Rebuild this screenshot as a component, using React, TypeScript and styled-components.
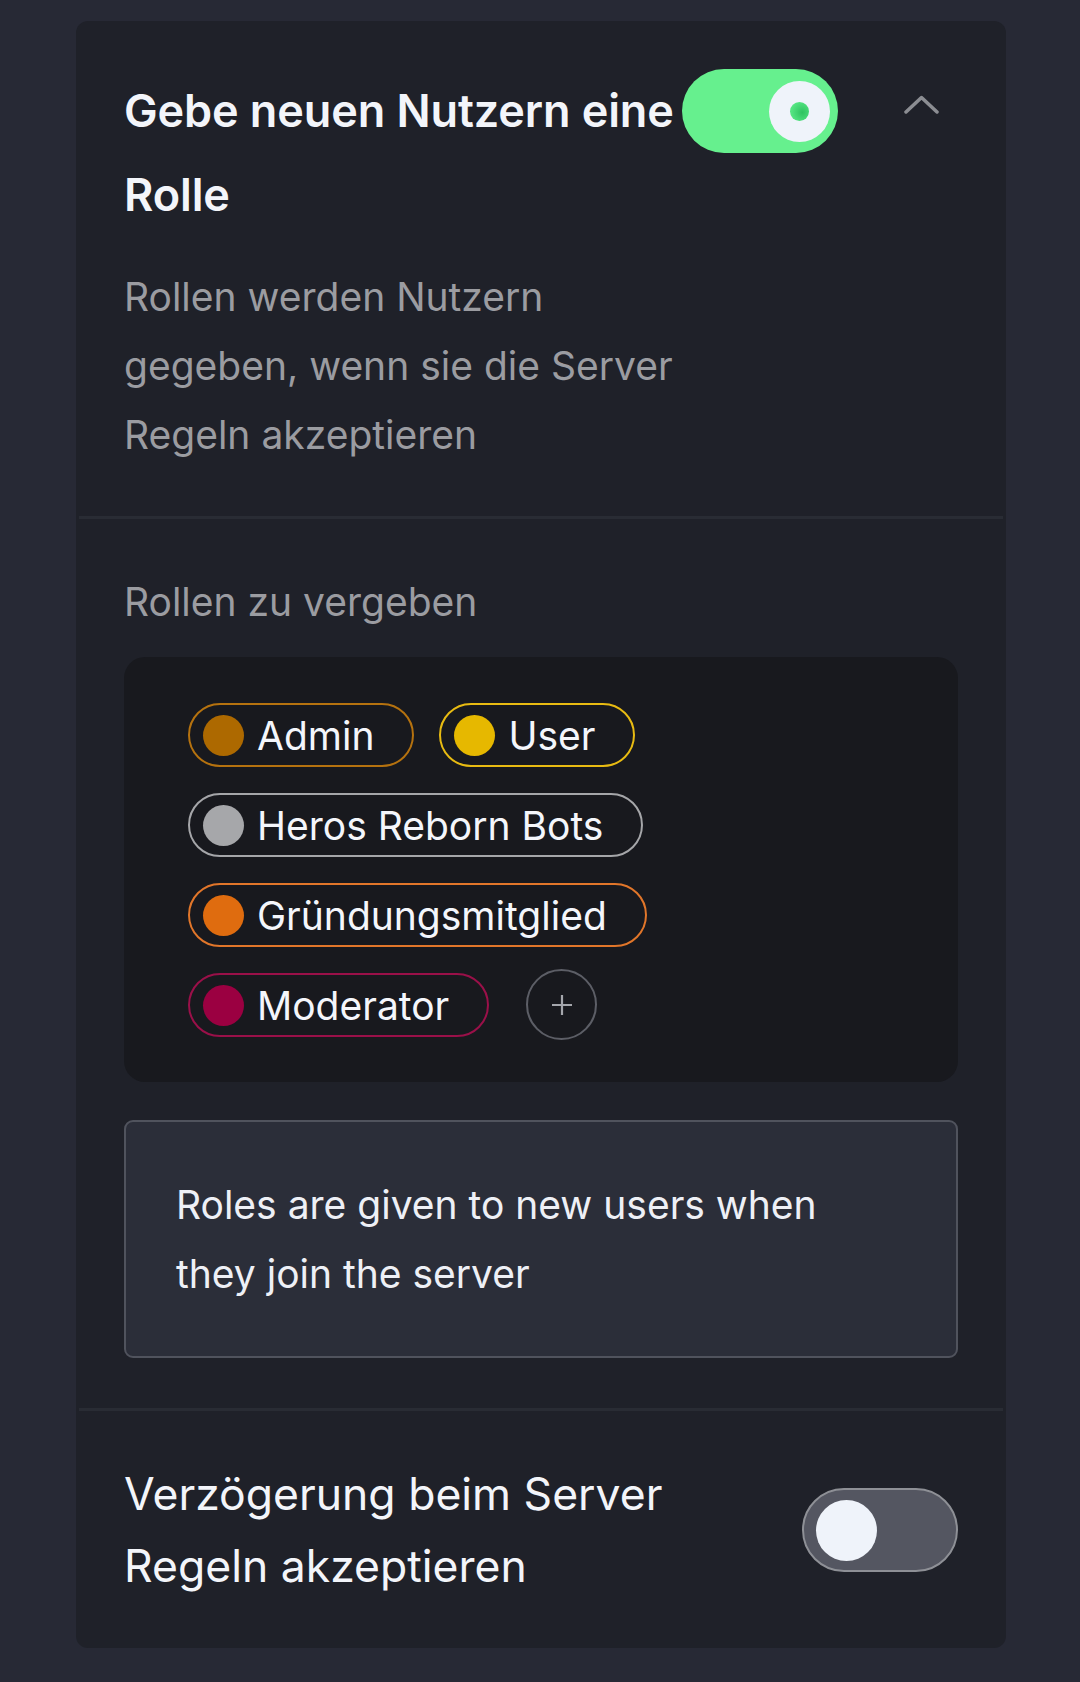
import React from "react";
import styled, { createGlobalStyle } from "styled-components";

const Global = createGlobalStyle`
  html, body { margin: 0; padding: 0; background: #272935; }
  body { font-family: Inter, "Noto Sans", sans-serif; -webkit-font-smoothing: antialiased; }
  * { box-sizing: border-box; }
`;

const Page = styled.div`
  min-height: 1682px;
  padding: 21px 74px 34px 76px;
  background: #272935;
`;

const Card = styled.section`
  background: #1f2129;
  border-radius: 12px;
  overflow: hidden;
`;

const Block = styled.div<{ $pt: number; $pb: number }>`
  padding: ${(p) => p.$pt}px 48px ${(p) => p.$pb}px 48px;
`;

const Divider = styled.div`
  height: 3px;
  margin: 0 3px;
  background: #292c34;
`;

const Header = styled.div`
  display: flex;
  align-items: flex-start;
`;

const Title = styled.h2`
  flex: 0 0 558px;
  margin: 0;
  font-size: 45px;
  line-height: 84px;
  font-weight: 600;
  color: #f3f5fa;
  letter-spacing: -0.1px;
  white-space: normal;
`;

const Toggle = styled.div<{ $on: boolean }>`
  flex: 0 0 auto;
  width: 156px;
  height: 84px;
  border-radius: 42px;
  display: flex;
  align-items: center;
  justify-content: ${(p) => (p.$on ? "flex-end" : "flex-start")};
  padding: ${(p) => (p.$on ? "0 8px" : "0 12px")};
  background: ${(p) => (p.$on ? "#66f08e" : "#545661")};
  border: ${(p) => (p.$on ? "none" : "2px solid #8e9096")};
`;

const Knob = styled.div`
  width: 61px;
  height: 61px;
  border-radius: 50%;
  background: #eff3fa;
  display: flex;
  align-items: center;
  justify-content: center;
`;

const KnobDot = styled.div`
  width: 19px;
  height: 19px;
  border-radius: 50%;
  background: radial-gradient(circle at 65% 55%, #2fc260 0%, #55e582 70%);
`;

const Chevron = styled.button`
  margin: 26px 19px 0 auto;
  padding: 0;
  border: none;
  background: none;
  width: 35px;
  height: 19px;
  display: flex;
  color: #8b8d92;
`;

const Desc = styled.p`
  margin: 25px 0 0;
  max-width: 570px;
  font-size: 39px;
  line-height: 69px;
  color: #9b9ca1;
`;

const Label = styled.div`
  font-size: 39px;
  line-height: 69px;
  color: #9b9ca1;
`;

const RolesBox = styled.div`
  margin-top: 21px;
  background: #18191e;
  border-radius: 21px;
  padding: 46px 64px 45px;
  display: flex;
  flex-wrap: wrap;
  align-items: center;
  column-gap: 25px;
  row-gap: 26px;
`;

const Chip = styled.div<{ $b: string }>`
  height: 64px;
  border-radius: 32px;
  border: 2px solid ${(p) => p.$b};
  display: flex;
  align-items: center;
  padding: 0 38px 0 13px;
  gap: 13px;
  font-size: 39px;
  color: #f4f6fb;
  white-space: nowrap;
`;

const Dot = styled.span<{ $c: string }>`
  width: 41px;
  height: 41px;
  border-radius: 50%;
  background: ${(p) => p.$c};
  flex: 0 0 auto;
`;

const AddButton = styled.button`
  width: 71px;
  height: 71px;
  margin: -4px 0 -3px 12px;
  border-radius: 50%;
  border: 2px solid #5c5e66;
  background: transparent;
  display: flex;
  align-items: center;
  justify-content: center;
  padding: 0;
  color: #a4a6ac;
`;

const InfoBox = styled.div`
  margin-top: 38px;
  background: #2b2e39;
  border: 2px solid #50535d;
  border-radius: 9px;
  padding: 48px 110px 48px 50px;
  font-size: 39px;
  line-height: 69px;
  color: #eef0f6;
`;

const Row = styled.div`
  display: flex;
  align-items: center;
  justify-content: space-between;
`;

const RowText = styled.div`
  font-size: 44.5px;
  line-height: 72px;
  color: #f3f5fa;
  max-width: 580px;
`;

const roles = [
  { name: "Admin", dot: "#ad6900", border: "#b5720f" },
  { name: "User", dot: "#e6b800", border: "#e8bb12" },
  { name: "Heros Reborn Bots", dot: "#a6a7aa", border: "#a5a6a9" },
  { name: "Gründungsmitglied", dot: "#df6c0f", border: "#e1762a" },
  { name: "Moderator", dot: "#9b0041", border: "#9a1049" },
];

export default function App() {
  return (
    <>
      <Global />
      <Page>
        <Card>
          <Block $pt={48} $pb={47}>
            <Header>
              <Title>Gebe neuen Nutzern eine Rolle</Title>
              <Toggle $on>
                <Knob>
                  <KnobDot />
                </Knob>
              </Toggle>
              <Chevron aria-label="Einklappen">
                <svg width="35" height="19" viewBox="0 0 35 19" fill="none">
                  <polyline
                    points="2,17 17.5,2.5 33,17"
                    stroke="currentColor"
                    strokeWidth="3.5"
                    strokeLinecap="round"
                    strokeLinejoin="round"
                  />
                </svg>
              </Chevron>
            </Header>
            <Desc>Rollen werden Nutzern gegeben, wenn sie die Server Regeln akzeptieren</Desc>
          </Block>
          <Divider />
          <Block $pt={48} $pb={50}>
            <Label>Rollen zu vergeben</Label>
            <RolesBox>
              {roles.map((r) => (
                <Chip key={r.name} $b={r.border}>
                  <Dot $c={r.dot} />
                  {r.name}
                </Chip>
              ))}
              <AddButton aria-label="Rolle hinzufügen">
                <svg width="22" height="22" viewBox="0 0 22 22">
                  <path d="M11 1v20M1 11h20" stroke="currentColor" strokeWidth="2.2" />
                </svg>
              </AddButton>
            </RolesBox>
            <InfoBox>Roles are given to new users when they join the server</InfoBox>
          </Block>
          <Divider />
          <Block $pt={47} $pb={46}>
            <Row>
              <RowText>Verzögerung beim Server Regeln akzeptieren</RowText>
              <Toggle $on={false}>
                <Knob />
              </Toggle>
            </Row>
          </Block>
        </Card>
      </Page>
    </>
  );
}
